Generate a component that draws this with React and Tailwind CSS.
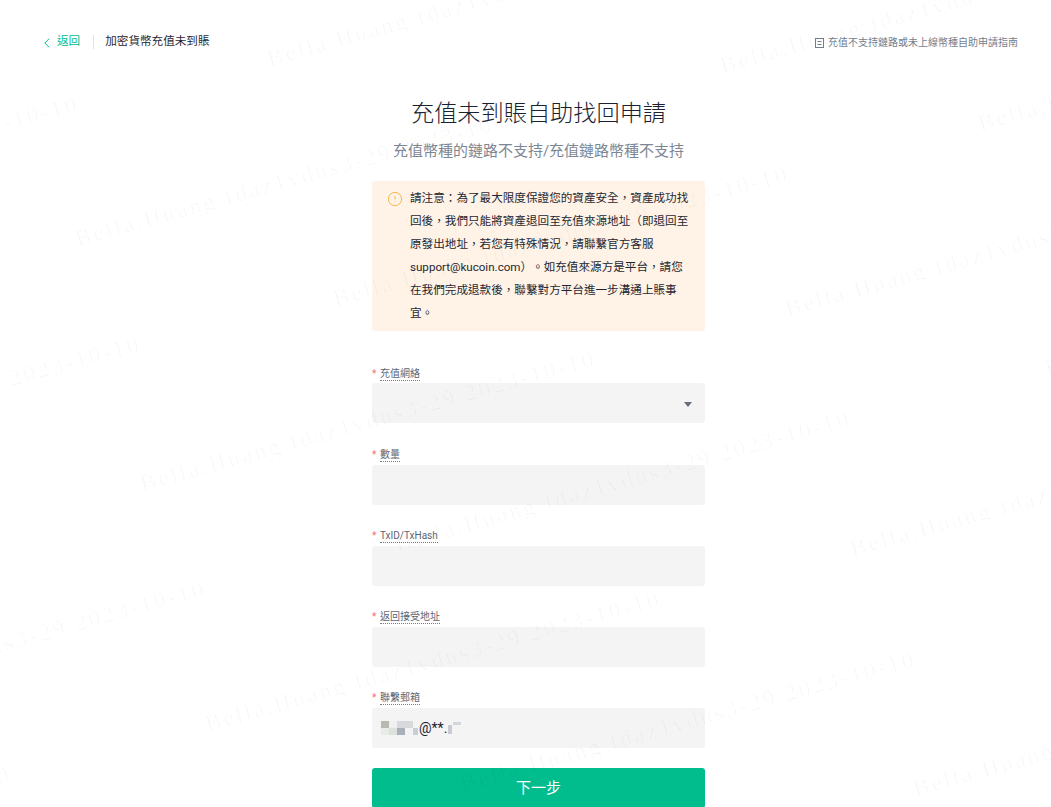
import { CircleAlert } from "lucide-react";

const FONT = "font-['Roboto','Noto_Sans_CJK_TC',sans-serif]";

const WATERMARK = "Bella.Huang fdaz1vdus3-29 2023-10-10";

// left end of each tilted watermark line
const MARKS = [
  [271, 71], [724, 78], [982, 136],
  [-373, 241], [79, 251], [337, 311], [789, 321],
  [-311, 481], [144, 496], [399, 556], [854, 561], [1049, 381],
  [-246, 726], [209, 736], [464, 796], [917, 801], [-441, 911],
];

function Watermarks() {
  return (
    <div className="pointer-events-none absolute inset-0 overflow-hidden">
      {MARKS.map(([x, y]) => (
        <span
          key={`${x}-${y}`}
          className="absolute origin-bottom-left -rotate-[15.5deg] whitespace-pre font-['Liberation_Serif',serif] text-[23px] leading-[24px] tracking-[2.8px] text-black/[0.03]"
          style={{ left: x, top: y - 24 }}
        >
          {WATERMARK}
        </span>
      ))}
    </div>
  );
}

function Field({ label, first, children }) {
  return (
    <div className={first ? "mb-[25px]" : "mb-[24px]"}>
      <div className={first ? "flex h-[16px] items-start" : "flex h-[17px] items-start"}>
        <span className="w-[8px] text-[10px] leading-[13px] text-[#f56c6c]">*</span>
        <span className="border-b border-dotted border-[#737e8d] text-[10px] leading-[13px] text-[#5d6673]">{label}</span>
      </div>
      <div className="relative flex h-[40px] items-center rounded-[3px] bg-[#f4f4f4]">{children}</div>
    </div>
  );
}

function Mosaic() {
  const rows = [
    ["#b9b9b1", "#f0f0f0", "#d8d9dc", "#d6dad9", "#f4f4f4"],
    ["#e8ece9", "#dde2da", "#a9b0b9", "#f3f3f3", "#c9cdd6"],
  ];
  return (
    <div className="flex flex-col">
      {rows.map((row, i) => (
        <div key={i} className="flex h-[7px]">
          {row.map((c, j) => (
            <div key={j} className={j === 4 ? "h-full w-[5px]" : "h-full w-[8px]"} style={{ backgroundColor: c }} />
          ))}
        </div>
      ))}
    </div>
  );
}

export default function App() {
  return (
    <div lang="zh-TW" className={`relative h-screen w-full overflow-hidden bg-white ${FONT}`}>
      {/* Header */}
      <div className="flex h-[85px] items-center justify-between pb-[1px] pl-[44px] pr-[33px]">
        <div className="flex items-center text-[11.6px]">
          <svg width="6" height="10" viewBox="0 0 6 10" fill="none" stroke="#01bc8d" strokeWidth="1" className="mr-[7px] mt-[3px]">
            <path d="M5.2 0.6L0.8 5l4.4 4.4" />
          </svg>
          <span className="text-[#01bc8d]">返回</span>
          <div className="ml-[13px] mr-[11px] h-[14px] w-px bg-[#e3e3e3]" />
          <span className="text-[#1f2733]">加密貨幣充值未到賬</span>
        </div>
        <div className="flex items-center text-[10px] text-[#737e8d]">
          <svg width="9" height="10" viewBox="0 0 9 10" fill="none" stroke="#737e8d" strokeWidth="1" className="mr-[4px] mt-[1px]">
            <rect x="0.5" y="0.5" width="8" height="9" />
            <path d="M2.5 3.5h4M2.5 6.5h4" />
          </svg>
          充值不支持鏈路或未上線幣種自助申請指南
        </div>
      </div>

      {/* Form column */}
      <div className="ml-[372px] w-[333px]">
        <h1 className="pb-[1px] text-center text-[23.2px] font-light leading-[56px] text-[#1a2230]">充值未到賬自助找回申請</h1>
        <p className="mb-[17px] mt-[-4px] text-center text-[15px] leading-[26px] text-[#7d8794]">
          充值幣種的鏈路不支持/充值鏈路幣種不支持
        </p>

        <div className="mb-[36px] flex rounded-[3px] bg-[#fef3e6] py-[6px] pl-[15px] pr-[14px]">
          <CircleAlert size={16} strokeWidth={1.5} className="mr-[7px] mt-[4px] shrink-0 text-[#f9b64b]" />
          <p className="text-[11.6px] leading-[23px] text-[#1f2733] [text-spacing-trim:space-all]">
            請注意：為了最大限度保證您的資產安全，資產成功找回後，我們只能將資產退回至充值來源地址（即退回至原發出地址，若您有特殊情況，請聯繫官方客服 support@kucoin.com）。如充值來源方是平台，請您在我們完成退款後，聯繫對方平台進一步溝通上賬事宜。
          </p>
        </div>

        <Field label="充值網絡" first>
          <div className="absolute right-[13px] top-[19px] h-0 w-0 border-x-[4px] border-t-[5px] border-x-transparent border-t-[#666e7a]" />
        </Field>
        <Field label="數量" />
        <Field label="TxID/TxHash" />
        <Field label="返回接受地址" />
        <Field label="聯繫郵箱">
          <div className="flex items-center pl-[9px]">
            <Mosaic />
            <span className="ml-[1px] text-[14px] text-[#1a2230]">@**.</span>
            <div className="ml-[1px] flex flex-col">
              <div className="ml-[5px] h-[3px] w-[8px] bg-[#d3d6dc]" />
              <div className="h-[9px] w-[4px] bg-[#c9ccd4]" />
            </div>
          </div>
        </Field>

        <button className="-mt-[4px] h-[40px] w-full rounded-[3px] bg-[#01bc8d] text-[15px] text-white">下一步</button>
      </div>

      <Watermarks />
    </div>
  );
}
